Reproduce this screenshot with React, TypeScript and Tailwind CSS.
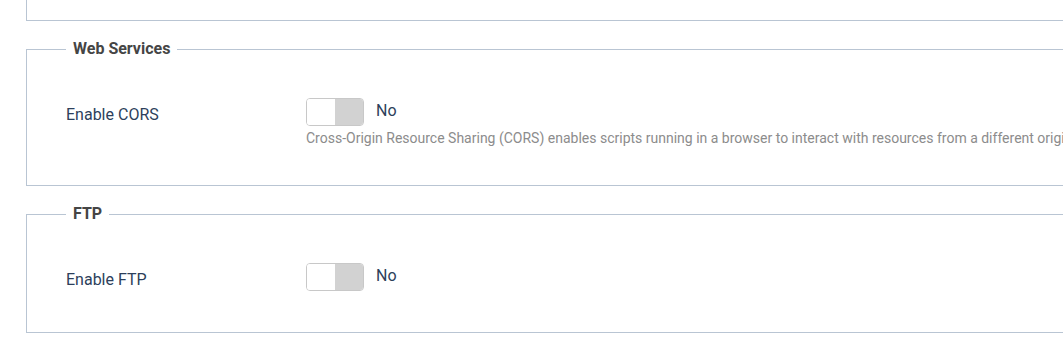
import { useState } from 'react';

/**
 * Settings panel: Web Services / FTP fieldsets
 */

interface ToggleRowProps {
  label: string;
  description?: string;
}

function ToggleRow({ label, description }: ToggleRowProps) {
  const [on, setOn] = useState(false);

  return (
    <div className="grid grid-cols-[240px_1fr]">
      <div className="h-[32px] pt-[5px] text-[16px] leading-[24px] text-[#2d3f5b]">{label}</div>
      <div>
        <div className="flex h-[28px] items-center gap-[12px]">
          <button
            type="button"
            onClick={() => setOn(!on)}
            className="flex h-[28px] w-[58px] overflow-hidden rounded-[4px] border border-[#c8c8c8] bg-white"
          >
            <span className={on ? 'h-full w-1/2 bg-[#4a90d9]' : 'h-full w-1/2 bg-white'} />
            <span className={on ? 'h-full w-1/2 bg-white' : 'h-full w-1/2 bg-[#d2d2d2]'} />
          </button>
          <span className="-mt-[2px] text-[16px] leading-[24px] text-[#2d3f5b]">{on ? 'Yes' : 'No'}</span>
        </div>
        {description && (
          <div className="mt-[2px] whitespace-nowrap text-[14px] leading-[20px] text-[#8c8c8c]">
            {description}
          </div>
        )}
      </div>
    </div>
  );
}

function Section({ title, children }: { title: string; children: React.ReactNode }) {
  return (
    <fieldset className="mt-[18px] border border-[#b9c5d3] pl-[39px] pt-[39px] pb-[37px]">
      <legend className="px-[7px] text-[16px] font-bold leading-[20px] text-[#454545]">{title}</legend>
      {children}
    </fieldset>
  );
}

export default function App() {
  return (
    <div className="h-[344px] w-[1063px] overflow-hidden bg-white font-['Roboto',_'Liberation_Sans',_sans-serif]">
      <div className="ml-[26px] w-[1100px]">
        {/* vorige sectie, alleen onderrand zichtbaar */}
        <div className="h-[21px] border-x border-b border-[#b9c5d3]" />

        <Section title="Web Services">
          <ToggleRow
            label="Enable CORS"
            description="Cross-Origin Resource Sharing (CORS) enables scripts running in a browser to interact with resources from a different origin."
          />
        </Section>

        <Section title="FTP">
          <ToggleRow label="Enable FTP" />
        </Section>
      </div>
    </div>
  );
}
